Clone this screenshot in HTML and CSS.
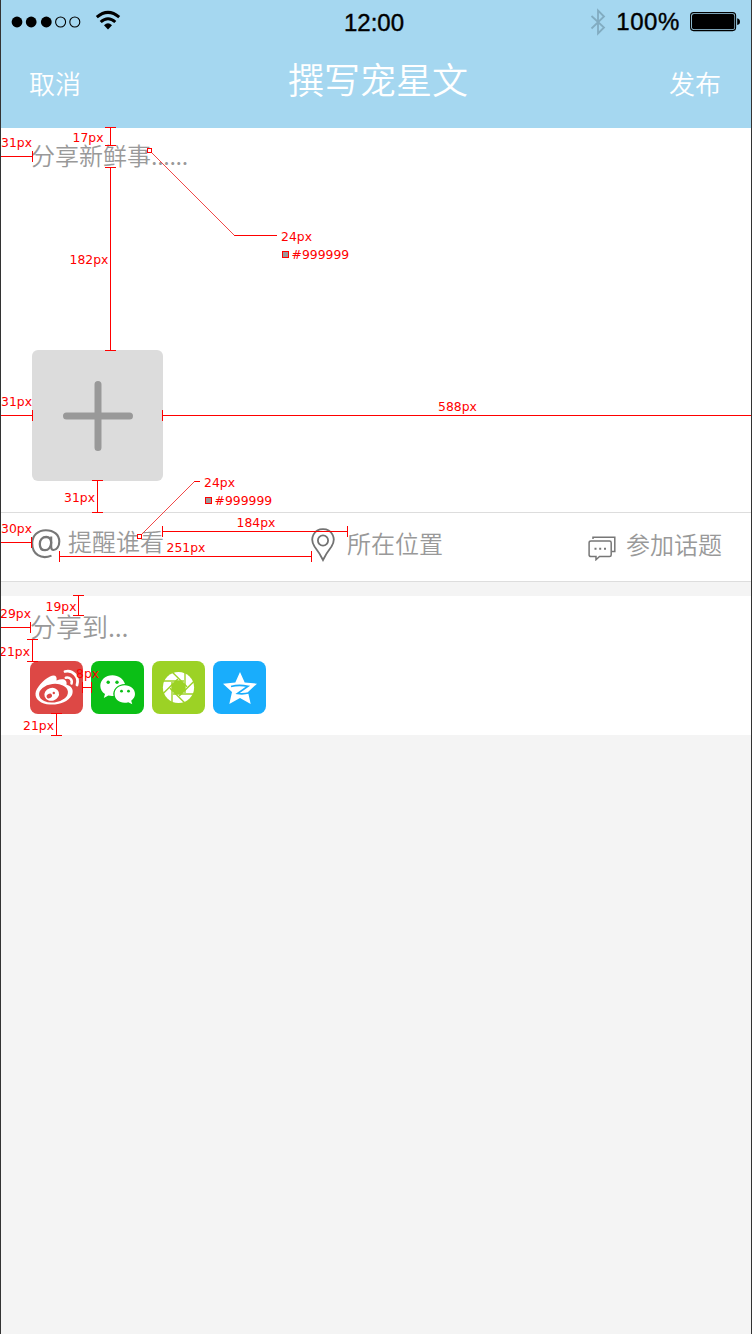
FILE: index.html
```html
<!DOCTYPE html>
<html lang="zh-CN">
<head>
<meta charset="utf-8">
<title>撰写宠星文</title>
<link rel="stylesheet" href="styles.css">
</head>
<body>
<div class="screen">
  <header class="header">
    <div class="status">
      <div class="carrier">
        <svg class="signal" width="94" height="40" viewBox="0 0 94 40">
          <g fill="#000"><circle cx="17" cy="20" r="5.400"/><circle cx="31.200" cy="20" r="5.400"/><circle cx="46.300" cy="20" r="5.400"/></g>
          <g fill="none" stroke="#000" stroke-width="1.100"><circle cx="60.600" cy="20" r="5"/><circle cx="74.800" cy="20" r="5"/></g>
        </svg>
        <svg class="wifi" width="28" height="24" viewBox="0 0 28 24">
          <g fill="none" stroke="#000" stroke-width="3"><path d="M2.800 9.200Q14 -.4 25.200 9.200"/><path d="M6.700 14Q14 7.400 21.300 14"/></g>
          <path d="M10 17.200Q14 13.500 18 17.200L14 21.500Z"/>
        </svg>
      </div>
      <span class="clock">12:00</span>
      <div class="power">
        <svg width="16" height="28" viewBox="0 0 16 28"><path d="M1.500 8 14 19.500 8 25.500V2.500L14 8.500 1.500 20.500" fill="none" stroke="#82acc1" stroke-width="1.800"/></svg>
        <span class="percent">100%</span>
        <svg class="battery" width="51" height="20" viewBox="0 0 51 20"><rect x=".6" y=".6" width="45" height="18" rx="3" fill="none" stroke="#000" stroke-width="1.100"/><rect x="2" y="2" width="42.400" height="15.200" rx="2"/><path d="M47.200 6.300Q50 7 50 9.700T47.200 13Z"/></svg>
      </div>
    </div>
    <nav class="nav"><span class="action">取消</span><h1 class="title">撰写宠星文</h1><span class="action">发布</span></nav>
  </header>

  <section class="compose">
    <p class="placeholder">分享新鲜事<span class="dots">......</span></p>
    <div class="add">
      <svg width="131" height="131" viewBox="0 0 131 131"><path d="M66 34.500V97.500M34.500 66H97.500" stroke="#999" stroke-width="7" stroke-linecap="round"/></svg>
    </div>
  </section>

  <section class="tools">
    <div class="tool remind">
      <svg width="30" height="32" viewBox="0 0 30 32" fill="none" stroke="#777" stroke-width="2.100">
        <path d="M20.500 27.600C10 32 1.200 26 1.200 15.500C1.200 7.500 7 2.200 14.800 2.200C23 2.200 28.300 7 28.300 13.500C28.300 18.500 25.500 22 22.500 22C20.500 22 20.200 20.800 20.200 19V8.500"/>
        <path d="M20.200 14.500C20 11 18 9 15.300 9C11.300 9 8.800 12 8.800 16C8.800 20 11 22.200 14 22.200C17.500 22.200 20 19 20.200 14.500Z" stroke-width="2.300"/>
      </svg><span>提醒谁看</span>
    </div>
    <div class="tool place">
      <svg width="26" height="34" viewBox="0 0 26 34" fill="none" stroke="#727272" stroke-width="1.800"><path d="M13 32Q9.500 25 4.500 18.500C-1 10 4.500 1.100 13 1.100S27 10 21.500 18.500Q16.500 25 13 32Z"/><circle cx="13" cy="12.500" r="5.100"/></svg><span>所在位置</span>
    </div>
    <div class="tool topic">
      <svg width="28" height="25" viewBox="0 0 28 25" fill="none" stroke="#777" stroke-width="1.500"><path d="M5 3V1.200H26.800V15.500H24"/><path d="M3 5H21.500Q23.200 5 23.200 6.700V19Q23.200 20.500 21.500 20.500H11.500L8 23.700V20.500H3Q1.100 20.500 1.100 19V6.700Q1.100 5 3 5Z"/><path d="M6.500 12.800H8.500M11.200 12.800H13.200M16 12.800H18" stroke-width="2"/></svg><span>参加话题</span>
    </div>
  </section>

  <section class="share">
    <h2 class="share-title">分享到<span class="dots">...</span></h2>
    <div class="apps">
      <svg class="app weibo" viewBox="0 0 53 53">
        <path fill="#fff" d="M20 15.500C24.500 13.200 27.500 15 26.500 19.500C33 17 37.500 18.500 36.500 23.800C43 25.500 43.500 30 42 34C38 41 29 44 20 43.500C11 43 5 38.500 5.500 32.500C6 27 13 19 20 15.500Z"/>
        <ellipse cx="23.500" cy="32.200" rx="14.500" ry="9.300" fill="#dd4845" transform="rotate(-7 23.500 32.200)"/>
        <ellipse cx="21.700" cy="33.300" rx="7.400" ry="6.400" fill="#fff" transform="rotate(-18 21.700 33.300)"/>
        <ellipse cx="19.300" cy="35" rx="2.800" ry="2.200" fill="#dd4845" transform="rotate(-25 19.300 35)"/><circle cx="23.800" cy="32" r="1.200" fill="#dd4845"/>
        <g fill="none" stroke="#fff" stroke-width="2.800" stroke-linecap="round"><path d="M35 10.500C43 8.500 49.500 16 47 24"/><path d="M35.800 16.700C39.800 15.800 42.700 18.800 41.500 22.500" stroke-width="2.500"/></g>
      </svg>
      <svg class="app wechat" viewBox="0 0 53 53">
        <path fill="#fff" d="M21.500 14.200C14.500 14.200 9.300 19 9.300 24.700C9.300 28.200 11 31 14 33L12.800 37L17.400 34.600Q20 35.300 22.500 35C21 28.500 27 23 34 23C32.500 18 27.500 14.200 21.500 14.200Z"/>
        <path fill="#fff" d="M33.600 24.200C27.700 24.200 23.600 28.100 23.600 33C23.600 38 28 41.700 33.600 41.700Q35.500 41.700 37.300 41.200L41.300 43.300L40.200 39.700C42.500 38 44 35.600 44 33C44 28.100 39.500 24.200 33.600 24.200Z"/>
        <g fill="#0bbf16"><circle cx="17.200" cy="21.200" r="1.700"/><circle cx="26" cy="21.200" r="1.700"/><circle cx="30.500" cy="30.200" r="1.400"/><circle cx="37.500" cy="30.200" r="1.400"/></g>
      </svg>
      <svg class="app moments" viewBox="0 0 53 53">
        <circle cx="26.500" cy="26.500" r="15.600" fill="#fff"/>
        <path fill="#9cd225" d="M23.800 20H29.200L33 23.800V29.200L29.200 33H23.800L20 29.200V23.800Z"/>
        <g stroke="#9cd225" stroke-width="1.400"><path d="M32 20H11"/><path d="M32 20H11" transform="rotate(45 26.500 26.500)"/><path d="M32 20H11" transform="rotate(90 26.500 26.500)"/><path d="M32 20H11" transform="rotate(135 26.500 26.500)"/><path d="M32 20H11" transform="rotate(180 26.500 26.500)"/><path d="M32 20H11" transform="rotate(225 26.500 26.500)"/><path d="M32 20H11" transform="rotate(270 26.500 26.500)"/><path d="M32 20H11" transform="rotate(315 26.500 26.500)"/></g>
      </svg>
      <svg class="app qzone" viewBox="0 0 53 53">
        <path fill="#fff" d="M27 11L31.700 21.500L44 22.700L35 31L37.700 43L27 37L16.300 43L19 31L10 22.700L22.300 21.500Z"/>
        <path d="M18 25.500Q26 23.500 35 25.300L24.500 32.500Q30 33.600 36.500 31.800" fill="none" stroke="#19adfc" stroke-width="1.700"/>
      </svg>
    </div>
  </section>

  <svg class="notes" width="752" height="1334" viewBox="0 0 752 1334">
    <g class="rule">
      <path d="M105 127.500H116M110.500 127V146M105 145.500H116M105 167.500H116M110.500 167V350M105 350.500H116"/>
      <path d="M0 156.500H32M.5 151V162M32.500 151V162"/>
      <path d="M0 415.500H32M.5 410V421M32.500 410V421M162.500 410V421M162 415.500H752M751.500 410V421"/>
      <path d="M92 480.500H103M97.500 480V513M92 512.500H103"/>
      <path d="M0 542.500H31M.5 537V548M31.500 537V548"/>
      <path d="M162.500 526V537M162 531.500H348M347.500 526V537M59.500 551V562M59 556.500H312M311.500 551V562"/>
      <path d="M73 595.500H84M78.500 595V616M73 615.500H84M0 627.500H30M.5 622V633M30.500 622V633"/>
      <path d="M27 639.500H38M32.500 639V662M27 661.500H38M82.500 682V693M82 687.500H92M91.500 682V693"/>
      <path d="M51 713.500H62M56.500 713V736M51 735.500H62"/>
      <path d="M234 235.500H277M194 481.500H200"/>
    </g>
    <g class="leader"><path d="M151 152L234.500 235.500M141 535L194.500 481.500"/></g>
    <g class="handle"><rect x="147.500" y="148.500" width="4" height="4"/><rect x="137.500" y="534.500" width="4" height="4"/></g>
    <g class="swatch"><rect x="282.500" y="251.500" width="6" height="6"/><rect x="205.500" y="497.500" width="6" height="6"/></g>
    <g class="label">
      <text x="72.500" y="142">17px</text><text x="1" y="147">31px</text><text x="69.500" y="264">182px</text>
      <text x="281" y="241">24px</text><text x="291.500" y="259">#999999</text>
      <text x="1" y="406">31px</text><text x="438" y="411">588px</text><text x="64" y="502">31px</text>
      <text x="204" y="487">24px</text><text x="214.500" y="505">#999999</text>
      <text x="1" y="533">30px</text><text x="236.500" y="527">184px</text><text x="166.500" y="552">251px</text>
      <text x="45.500" y="611">19px</text><text x="0" y="618">29px</text><text x="-1" y="656">21px</text>
      <text x="76" y="678">8px</text><text x="23" y="730">21px</text>
    </g>
  </svg>
</div>
</body>
</html>
```
FILE: styles.css
```css
* { box-sizing: border-box; }
body { margin: 0; background: #f4f4f4; font-family: "Noto Sans CJK SC", sans-serif; font-weight: 350; color: #999; }
h1, h2, p { margin: 0; font-weight: 350; }
svg { display: block; flex: none; }

.screen { position: relative; width: 752px; height: 1334px; overflow: hidden; border: solid #333; border-width: 0 1px; background: #f4f4f4; }

.header { height: 128px; background: #a5d7f0; color: #fff; }
.status { display: grid; grid-template-columns: 343px 62px 1fr; height: 42px; align-items: center; color: #000; font-family: "Liberation Sans", Arial, sans-serif; font-size: 24px; font-weight: 400; -webkit-text-stroke: .4px #000; }
.carrier { display: flex; align-items: center; }
.signal { margin-left: -1px; margin-top: -1px; }
.wifi { margin-top: -5px; }
.clock { line-height: 42px; padding-top: 2px; white-space: nowrap; }
.power { display: flex; align-items: center; justify-content: flex-end; padding-right: 10px; }
.power svg:first-child { margin-right: 1px; }
.percent { margin: 0 10px 0 9px; letter-spacing: .6px; line-height: 42px; }
.battery { margin-top: -1px; }
.nav { display: flex; justify-content: space-between; height: 78px; padding: 0 30px 0 28px; }
.title { font-size: 36px; line-height: 73px; padding-left: 6px; }
.action { font-size: 26px; line-height: 82px; }
.dots { letter-spacing: -.3px; }

.compose { height: 385px; padding: 9px 31px 0 30px; background: #fff; border-bottom: 1px solid #ddd; }
.placeholder { height: 36px; font-size: 24px; line-height: 36px; }
.add { width: 131px; height: 131px; margin: 177px 0 0 1px; border-radius: 6px; background: #dcdcdc; }

.tools { display: grid; grid-template-columns: 279px 278px 1fr; height: 69px; padding-left: 30px; background: #fff; border-bottom: 1px solid #ddd; font-size: 24px; line-height: 36px; }
.tool { display: flex; align-items: center; height: 36px; white-space: nowrap; }
.remind { gap: 7px; margin-top: 10px; }
.remind svg { margin-top: 5px; }
.place { gap: 11px; margin-top: 12px; }
.place svg { margin-top: 3px; }
.topic { gap: 10px; margin-top: 13px; }
.topic svg { margin-top: 9px; }

.share { height: 139px; margin-top: 14px; padding: 11px 29px 0; background: #fff; }
.share-title { height: 54px; font-size: 26px; line-height: 38px; }
.apps { display: flex; gap: 8px; }
.app { width: 53px; height: 53px; border-radius: 8px; }
.weibo { background: #dd4845; }
.wechat { background: #0bbf16; }
.moments { background: #9cd225; }
.qzone { background: #19adfc; }

.notes { position: absolute; top: 0; left: -1px; }
.rule { fill: none; stroke: #f00; stroke-width: 1; shape-rendering: crispEdges; }
.leader { fill: none; stroke: #e33; stroke-width: .9; }
.handle { fill: #fff; stroke: #f00; }
.swatch { fill: #999; stroke: #f00; }
.label { fill: #f00; font: 400 12.4px "DejaVu Sans", Verdana, sans-serif; }
```
